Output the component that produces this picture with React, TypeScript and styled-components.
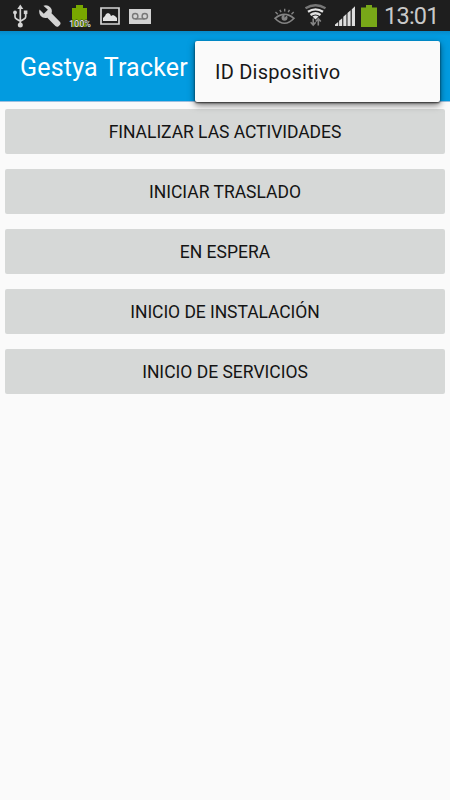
import React from 'react';
import styled, { createGlobalStyle } from 'styled-components';

const GlobalStyle = createGlobalStyle`
  * { box-sizing: border-box; }
  html, body { margin: 0; background: #fafafa; }
  body { font-family: Roboto, "Noto Sans", sans-serif; overflow: hidden; }
`;

const Screen = styled.main`
  width: 450px;
  height: 800px;
  display: flex;
  flex-direction: column;
  background: #fafafa;
`;

const StatusBar = styled.header`
  height: 31px;
  flex: none;
  display: flex;
  justify-content: space-between;
  padding: 0 12px;
  background: #1e1e1e;
`;

const IconGroup = styled.div`
  display: flex;
  height: 31px;
`;

const Glyph = styled.svg<{ $gap?: number }>`
  display: block;
  flex: none;
  height: 31px;
  margin-right: ${({ $gap = 0 }) => $gap}px;
`;

const Clock = styled.time`
  width: 54px;
  font-size: 23.5px;
  line-height: 32px;
  letter-spacing: -0.75px;
  white-space: nowrap;
  color: #c9c9c9;
`;

const AppBar = styled.div`
  position: relative;
  height: 71px;
  flex: none;
  display: flex;
  align-items: center;
  padding: 0 20px;
  background: linear-gradient(#078bca, #029be0 5px, #029be0);
  border-bottom: 1px solid #9bbfdf;
`;

const Title = styled.h1`
  margin: 0;
  padding-top: 4px;
  font-size: 25px;
  font-weight: 400;
  line-height: 32px;
  letter-spacing: 0.2px;
  white-space: nowrap;
  color: #fff;
`;

const Menu = styled.div`
  position: absolute;
  top: 10px;
  right: 10px;
  width: 245px;
  height: 61px;
  display: flex;
  align-items: center;
  padding: 1px 20px 0;
  border-radius: 2px;
  background: #fafafa;
  box-shadow: 0 3px 7px rgba(0, 0, 0, 0.55), 0 1px 2px rgba(0, 0, 0, 0.7);
`;

const MenuItem = styled.span<{ $tracking: number }>`
  padding-bottom: 1px;
  font-size: 20px;
  line-height: 26px;
  letter-spacing: ${({ $tracking }) => $tracking}px;
  white-space: nowrap;
  color: #171717;
`;

const Actions = styled.section`
  display: flex;
  flex-direction: column;
  gap: 15px;
  padding: 7px 5px;
`;

const ActionButton = styled.button<{ $tracking: number }>`
  height: 45px;
  padding: 1px 0 0;
  border: 0;
  border-radius: 2px;
  background: #d6d8d7;
  color: #141414;
  font: 400 17.5px/24px Roboto, "Noto Sans", sans-serif;
  letter-spacing: ${({ $tracking }) => $tracking}px;
  text-align: center;
`;

const UsbIcon = () => (
  <Glyph width="16" viewBox="12 0 16 31" $gap={11} fill="none" stroke="#d4d4d4" strokeWidth="1.7">
    <path d="M20.3 8v17M15 13.5v3.2q0 1.5 1.5 2.2l3.8 2.3 3.8-2.3q1.6-.7 1.6-2.2v-4" />
    <path d="M20.3 4.5l3 4.5h-6z" fill="#d4d4d4" stroke="none" />
    <circle cx="15" cy="12.5" r="1.9" fill="#d4d4d4" stroke="none" />
    <path d="M23.8 10.5h3.6v3.6h-3.6z" fill="#d4d4d4" stroke="none" />
    <circle cx="20.3" cy="25" r="2.5" fill="#d4d4d4" stroke="none" />
  </Glyph>
);

const WrenchIcon = () => (
  <Glyph width="22" viewBox="39 0 22 31" $gap={8} fill="#d4d4d4">
    <path d="M43.4 5.7q4-1.4 6.8 1.5 2.5 2.6 1.3 6.1l8.3 8.4q1.5 1.7 0 3.4l-1.2 1.2q-1.7 1.2-3.2-.2l-8.1-8.4q-4 1-6.6-1.8-2.2-2.5-1.2-6.3l4.3 4.1 4.1-3.9z" />
  </Glyph>
);

const ChargeLabel = styled.text`
  font: 500 9px Roboto, sans-serif;
  fill: #dedede;
  stroke: #252b17;
  stroke-width: 0.8px;
  paint-order: stroke;
`;

const ChargeIcon = () => (
  <Glyph width="24" viewBox="69 0 24 31" $gap={6}>
    <path d="M76 5h7v3h4v19H72V8h4z" fill="#78a800" />
    <ChargeLabel x="69" y="26.5" textLength="22" lengthAdjust="spacingAndGlyphs">100%</ChargeLabel>
  </Glyph>
);

const PictureIcon = () => (
  <Glyph width="22" viewBox="99 0 22 31" $gap={8}>
    <path d="M101 8h18v16h-18z" fill="none" stroke="#d4d4d4" strokeWidth="1.7" />
    <path d="M103 21v-3l2-2 1-2 2-1 2 1 1 2 2-1 2 1 2 2v3z" fill="#e2e2e2" />
  </Glyph>
);

const VoicemailIcon = () => (
  <Glyph width="22" viewBox="129 0 22 31">
    <path d="M129 9h22v15h-22z" fill="#d2d2d2" />
    <g fill="none" stroke="#777" strokeWidth="1.4">
      <circle cx="135.2" cy="16.2" r="2.7" />
      <circle cx="144.8" cy="16.2" r="2.7" />
      <path d="M135.2 18.9h9.6" />
    </g>
  </Glyph>
);

const EyeIcon = () => (
  <Glyph width="21" viewBox="274 0 21 31" $gap={9} fill="none" stroke="#838383" strokeWidth="1.6">
    <path d="M275 18.3q9.5-8 19 0-9.5 10-19 0z" />
    <path d="M275.5 12l2.3 2.2M279.8 9.8l1.3 2.4M284.7 8.8v2.8M289.5 9.8l-1.3 2.4M293.7 12l-2.2 2.2" strokeWidth="1.4" />
    <circle cx="284.5" cy="17.8" r="3" fill="#838383" stroke="none" />
    <path d="M284.5 17.8v-2.6h2.4z" fill="#1e1e1e" stroke="none" />
  </Glyph>
);

const WifiIcon = () => (
  <Glyph width="23" viewBox="304 0 23 31" $gap={8} fill="none">
    <path d="M305.5 8.3q10-6.2 20 0" stroke="#777" strokeWidth="2.4" />
    <path d="M308 11.8q7.5-5 15 0M310.5 15q5-3.5 10 0" stroke="#e3e3e3" strokeWidth="2.3" />
    <path d="M312.5 16.6q3-2 6 0l-3 2.8z" fill="#e3e3e3" />
    <path d="M313.2 18.5v6M310.7 22.2l2.5 2.8 2.5-2.8M318.3 25.5v-6M315.8 21.5l2.5-2.8 2.5 2.8" stroke="#858585" strokeWidth="1.6" />
  </Glyph>
);

const SignalIcon = () => (
  <Glyph width="20" viewBox="335 0 20 31" $gap={6} fill="#dedede">
    <path d="M335 26v-1.5l3.2-2.4V26zM339.1 26v-5.3l3.1-2.5V26zM343.3 26v-9.2l3.1-2.7V26zM347.5 26V13l3.1-2.7V26zM351.8 26V9.2l3.2-3V26z" />
  </Glyph>
);

const BatteryIcon = () => (
  <Glyph width="16" viewBox="361 0 16 31" $gap={7} fill="#78a818">
    <path d="M366 5h6v2.5h5V27h-16V7.5h5z" />
  </Glyph>
);

const actions = [
  { label: 'FINALIZAR LAS ACTIVIDADES', tracking: -0.04 },
  { label: 'INICIAR TRASLADO', tracking: 0 },
  { label: 'EN ESPERA', tracking: 0 },
  { label: 'INICIO DE INSTALACIÓN', tracking: -0.06 },
  { label: 'INICIO DE SERVICIOS', tracking: 0 },
];

export default function App() {
  return (
    <>
      <GlobalStyle />
      <Screen>
        <StatusBar>
          <IconGroup>
            <UsbIcon />
            <WrenchIcon />
            <ChargeIcon />
            <PictureIcon />
            <VoicemailIcon />
          </IconGroup>
          <IconGroup>
            <EyeIcon />
            <WifiIcon />
            <SignalIcon />
            <BatteryIcon />
            <Clock>13:01</Clock>
          </IconGroup>
        </StatusBar>
        <AppBar>
          <Title>Gestya Tracker</Title>
          <Menu role="menu">
            <MenuItem role="menuitem" $tracking={0.24}>ID Dispositivo</MenuItem>
          </Menu>
        </AppBar>
        <Actions>
          {actions.map(({ label, tracking }) => (
            <ActionButton key={label} type="button" $tracking={tracking}>
              {label}
            </ActionButton>
          ))}
        </Actions>
      </Screen>
    </>
  );
}
